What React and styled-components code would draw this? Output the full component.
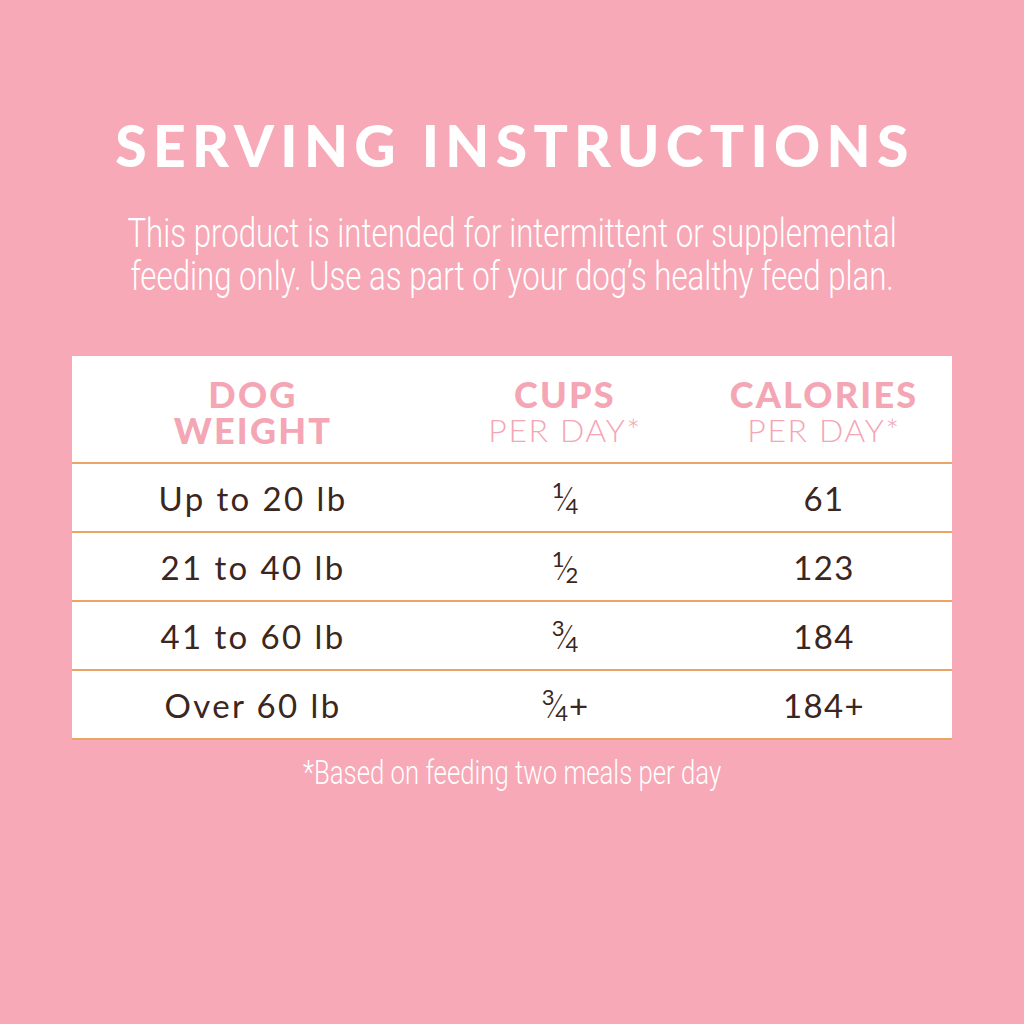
import React from 'react'
import styled, { createGlobalStyle } from 'styled-components'

const GlobalStyle = createGlobalStyle`
  html, body {
    margin: 0;
    padding: 0;
    background: #f7a9b7;
  }
`

const Page = styled.div`
  width: 1024px;
  height: 1024px;
  background: #f7a9b7;
  display: flex;
  flex-direction: column;
  align-items: center;
  box-sizing: border-box;
  padding-top: 112px;
`

const Title = styled.h1`
  margin: 0;
  font-family: Lato, "Open Sans", sans-serif;
  font-weight: 900;
  font-size: 57px;
  line-height: 66px;
  letter-spacing: 6.3px;
  margin-right: -6px;
  color: #fff;
`

// condensed light face in the reference; Roboto Light squeezed to match
const Intro = styled.p`
  margin: 34px 0 0;
  font-family: Roboto, "Noto Sans", sans-serif;
  font-weight: 300;
  font-size: 40px;
  line-height: 43px;
  color: #fff;
  text-align: center;
  white-space: nowrap;
  transform: scaleX(0.78);
`

const Table = styled.div`
  margin-top: 58px;
  width: 880px;
  background: #fff;
  display: grid;
  grid-template-columns: 362px 262px 256px;
`

const HeadCell = styled.div`
  height: 108px;
  border-bottom: 2px solid #e8a566;
  display: flex;
  flex-direction: column;
  align-items: center;
  justify-content: center;
  font-family: Lato, "Open Sans", sans-serif;
  font-size: 36px;
  line-height: 36px;
  color: #f4a6b5;
  text-align: center;
  padding-top: 6px;
  box-sizing: border-box;
`

const HeadMain = styled.span`
  font-weight: 900;
  letter-spacing: 2.2px;
`

const HeadSub = styled.span`
  font-weight: 300;
  font-size: 32px;
  letter-spacing: 1.6px;
`

const Cell = styled.div`
  height: 69px;
  border-bottom: 2px solid #e8a566;
  display: flex;
  align-items: center;
  justify-content: center;
  font-family: Lato, "Open Sans", sans-serif;
  font-size: 33px;
  letter-spacing: ${(p) => (p.$wide ? '2.4px' : '1.4px')};
  color: #3b2620;
  box-sizing: border-box;
`

const Frac = styled.span`
  display: inline-flex;
  align-items: center;
  height: 32px;
  letter-spacing: 0;
  font-weight: 400;
`

const Num = styled.span`
  font-size: 22px;
  line-height: 1;
  align-self: flex-start;
  margin-top: -3px;
`

const Slash = styled.span`
  font-size: 34px;
  line-height: 1;
  margin: 0 -2px;
  font-weight: 300;
`

const Den = styled.span`
  font-size: 22px;
  line-height: 1;
  align-self: flex-end;
  margin-bottom: -3px;
`

const Plus = styled.span`
  margin-left: 1px;
`

const Note = styled.p`
  margin: 12px 0 0;
  font-family: Roboto, "Noto Sans", sans-serif;
  font-weight: 300;
  font-size: 34px;
  color: #fff;
  white-space: nowrap;
  transform: scaleX(0.757);
`

const Fraction = ({ n, d, extra }) => (
  <Frac>
    <Num>{n}</Num>
    <Slash>⁄</Slash>
    <Den>{d}</Den>
    {extra && <Plus>{extra}</Plus>}
  </Frac>
)

const rows = [
  ['Up to 20 lb', <Fraction n="1" d="4" />, '61'],
  ['21 to 40 lb', <Fraction n="1" d="2" />, '123'],
  ['41 to 60 lb', <Fraction n="3" d="4" />, '184'],
  ['Over 60 lb', <Fraction n="3" d="4" extra="+" />, '184+'],
]

export default function App() {
  return (
    <Page>
      <GlobalStyle />
      <Title>SERVING INSTRUCTIONS</Title>
      <Intro>
        This product is intended for intermittent or supplemental<br />
        feeding only. Use as part of your dog’s healthy feed plan.
      </Intro>
      <Table>
        <HeadCell>
          <HeadMain>DOG</HeadMain>
          <HeadMain>WEIGHT</HeadMain>
        </HeadCell>
        <HeadCell>
          <HeadMain>CUPS</HeadMain>
          <HeadSub>PER DAY*</HeadSub>
        </HeadCell>
        <HeadCell>
          <HeadMain>CALORIES</HeadMain>
          <HeadSub>PER DAY*</HeadSub>
        </HeadCell>
        {rows.map((r, ri) =>
          r.map((v, i) => (
            <Cell key={ri + '-' + i} $wide={i === 0}>
              {v}
            </Cell>
          ))
        )}
      </Table>
      <Note>*Based on feeding two meals per day</Note>
    </Page>
  )
}
